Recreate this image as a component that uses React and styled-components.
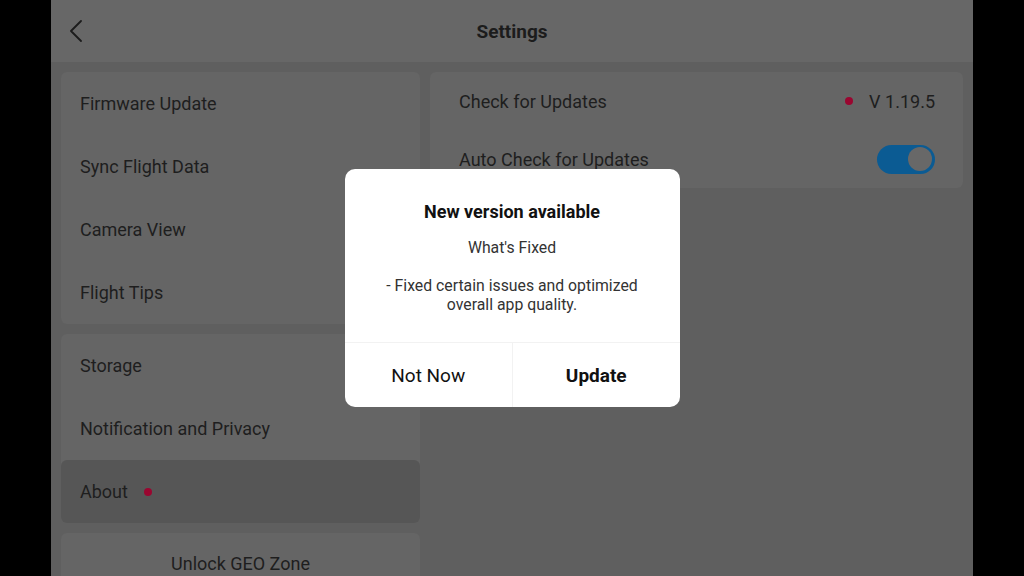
import React from "react";
import styled, { createGlobalStyle } from "styled-components";

const Global = createGlobalStyle`
  html, body { margin: 0; padding: 0; background: #000; }
  body { font-family: Roboto, "Noto Sans", Arial, sans-serif; }
  * { box-sizing: border-box; }
`;

const Frame = styled.div`
  position: relative;
  width: 922px;
  height: 576px;
  margin: 0 auto;
  overflow: hidden;
  background: #5f5f5f;
  display: flex;
  flex-direction: column;
`;

const Header = styled.header`
  height: 62px;
  flex: none;
  background: #676767;
  display: grid;
  grid-template-columns: 1fr auto 1fr;
  align-items: center;
  padding: 0 18px;
`;

const BackButton = styled.div`
  display: flex;
  align-items: center;
  color: #1c1c1c;
`;

const Title = styled.h1`
  margin: 0;
  font-size: 19px;
  font-weight: 700;
  color: #1c1c1c;
`;

const Body = styled.div`
  flex: 1;
  display: flex;
  gap: 10px;
  padding: 10px 10px 0;
  min-height: 0;
`;

const LeftColumn = styled.div`
  width: 359px;
  flex: none;
  display: flex;
  flex-direction: column;
  gap: 10px;
`;

const RightColumn = styled.div`
  flex: 1;
  display: flex;
  flex-direction: column;
`;

const Card = styled.div`
  background: #656565;
  border-radius: 6px;
  display: flex;
  flex-direction: column;
`;

const MenuRow = styled.div`
  height: ${(p) => (p.$short ? 60 : 63)}px;
  flex: none;
  display: flex;
  align-items: center;
  justify-content: ${(p) => (p.$center ? "center" : "flex-start")};
  gap: 16px;
  padding-left: ${(p) => (p.$center ? 0 : 19)}px;
  font-size: 18px;
  color: #1e1e1e;
  border-radius: 6px;
  background: ${(p) => (p.$selected ? "#565656" : "transparent")};
`;

const Dot = styled.span`
  width: 8px;
  height: 8px;
  border-radius: 50%;
  background: #9a0630;
  display: inline-block;
`;

const SettingRow = styled.div`
  height: 58px;
  display: flex;
  align-items: center;
  justify-content: space-between;
  padding: 0 28px 0 29px;
  font-size: 18px;
  color: #1e1e1e;
`;

const Trailing = styled.div`
  display: flex;
  align-items: center;
  gap: 16px;
`;

const Toggle = styled.div`
  width: 58px;
  height: 29px;
  border-radius: 15px;
  background: #0b5b93;
  display: flex;
  align-items: center;
  justify-content: flex-end;
  padding-right: 3px;
`;

const Knob = styled.div`
  width: 24px;
  height: 24px;
  border-radius: 50%;
  background: #686868;
`;

const Scrim = styled.div`
  position: absolute;
  inset: 0;
  display: flex;
  align-items: center;
  justify-content: center;
`;

const Dialog = styled.div`
  width: 335px;
  background: #fff;
  border-radius: 10px;
  overflow: hidden;
  text-align: center;
`;

const DialogContent = styled.div`
  padding: 32px 20px 28px;
`;

const DialogTitle = styled.h2`
  margin: 0;
  font-size: 18px;
  line-height: 22px;
  font-weight: 700;
  color: #111;
`;

const DialogSub = styled.p`
  margin: 15px 0 0;
  font-size: 15.8px;
  line-height: 19px;
  color: #333;
`;

const DialogMessage = styled.p`
  margin: 19px 0 0;
  font-size: 15.8px;
  line-height: 19px;
  color: #333;
`;

const Actions = styled.div`
  display: grid;
  grid-template-columns: 1fr 1fr;
  border-top: 1px solid #f2f2f2;
`;

const ActionButton = styled.div`
  height: 64px;
  display: flex;
  align-items: center;
  justify-content: center;
  font-size: 19px;
  font-weight: ${(p) => (p.$primary ? 700 : 400)};
  color: #111;
  border-left: ${(p) => (p.$primary ? "1px solid #f2f2f2" : "none")};
`;

export default function App() {
  return (
    <>
      <Global />
      <Frame>
        <Header>
          <BackButton>
            <svg width="16" height="22" viewBox="0 0 16 22" fill="none">
              <polyline
                points="12,1 2,11 12,21"
                stroke="currentColor"
                strokeWidth="1.8"
                strokeLinecap="round"
                strokeLinejoin="round"
              />
            </svg>
          </BackButton>
          <Title>Settings</Title>
          <div />
        </Header>
        <Body>
          <LeftColumn>
            <Card>
              <MenuRow>Firmware Update</MenuRow>
              <MenuRow>Sync Flight Data</MenuRow>
              <MenuRow>Camera View</MenuRow>
              <MenuRow>Flight Tips</MenuRow>
            </Card>
            <Card>
              <MenuRow>Storage</MenuRow>
              <MenuRow>Notification and Privacy</MenuRow>
              <MenuRow $selected>
                About <Dot />
              </MenuRow>
            </Card>
            <Card>
              <MenuRow $center $short>Unlock GEO Zone</MenuRow>
            </Card>
          </LeftColumn>
          <RightColumn>
            <Card>
              <SettingRow>
                <span>Check for Updates</span>
                <Trailing>
                  <Dot />
                  <span>V 1.19.5</span>
                </Trailing>
              </SettingRow>
              <SettingRow>
                <span>Auto Check for Updates</span>
                <Toggle>
                  <Knob />
                </Toggle>
              </SettingRow>
            </Card>
          </RightColumn>
        </Body>
        <Scrim>
          <Dialog>
            <DialogContent>
              <DialogTitle>New version available</DialogTitle>
              <DialogSub>What's Fixed</DialogSub>
              <DialogMessage>
                - Fixed certain issues and optimized
                <br />
                overall app quality.
              </DialogMessage>
            </DialogContent>
            <Actions>
              <ActionButton>Not Now</ActionButton>
              <ActionButton $primary>Update</ActionButton>
            </Actions>
          </Dialog>
        </Scrim>
      </Frame>
    </>
  );
}
